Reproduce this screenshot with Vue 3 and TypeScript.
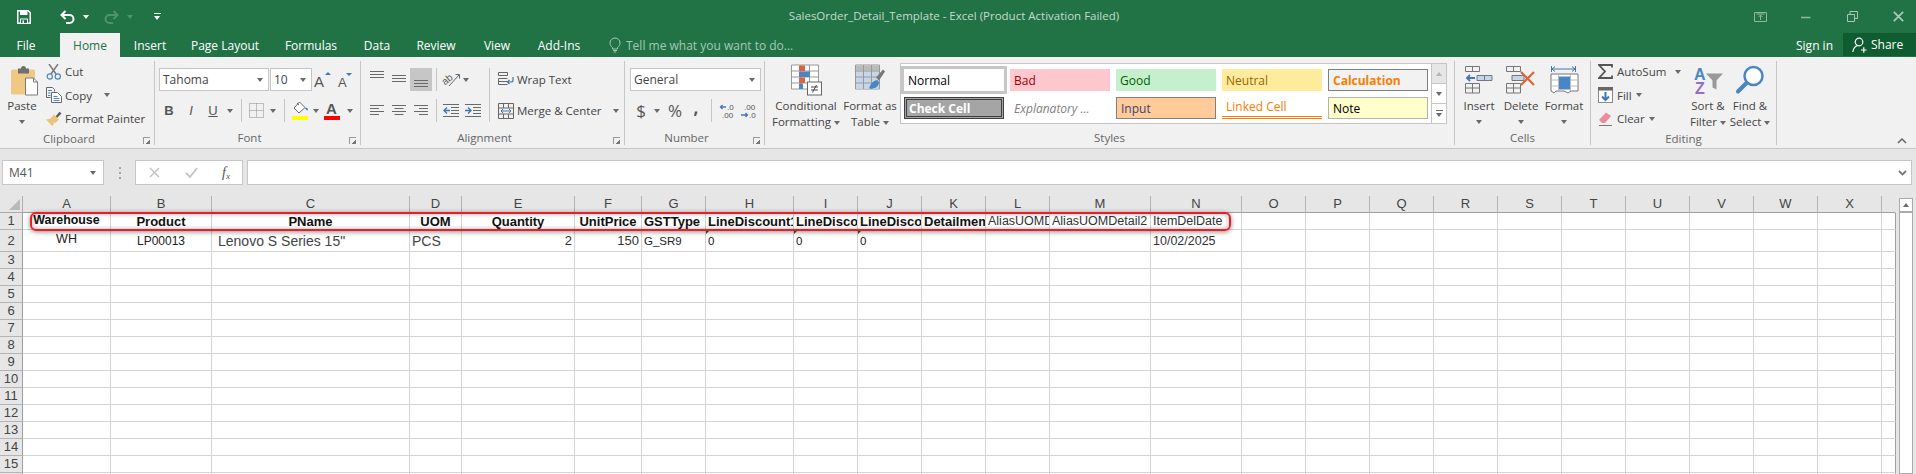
<template>
  <div class="excel">
    <!-- title bar -->
    <header class="titlebar">
      <div class="qat">
        <svg class="qat-save" width="14" height="14" viewBox="0 0 14 14"><path d="M.75.75h10.5l2 2v10.5H.75z" fill="none" stroke="#fff" stroke-width="1.5"/><path d="M3 1h7.5v4H3zM3 8.5h8V13H3z" fill="#fff"/><path d="M4 9.5h6V13H4z" fill="#217346"/><path d="M5.5 10.5h1.5V13H5.5z" fill="#fff"/></svg>
        <svg class="qat-undo" width="15" height="14" viewBox="0 0 15 14"><path d="M5.5 1 1.5 5l4 4M1.500 5H9.500a3.800 3.800 0 0 1 0 8H6" fill="none" stroke="#fff" stroke-width="2"/></svg>
        <i class="caret white qat-c1"></i>
        <svg class="qat-redo" width="15" height="14" viewBox="0 0 15 14"><path d="M9.500 1l4 4-4 4M13.500 5H5.500a3.800 3.800 0 0 0 0 8H9" fill="none" stroke="#4f9270" stroke-width="2"/></svg>
        <i class="caret dim qat-c2"></i>
        <div class="qat-more"><b></b><i class="caret white"></i></div>
      </div>
      <div class="doc-title">SalesOrder_Detail_Template - Excel (Product Activation Failed)</div>
      <div class="winctl">
        <svg width="13" height="10" viewBox="0 0 13 10"><path d="M.5.5h12v9H.5z" fill="none" stroke="#8fb8a0"/><path d="M6.500 8V3.500M4.500 5l2-2 2 2M2.500 2h8" fill="none" stroke="#8fb8a0"/></svg>
        <svg width="10" height="10" viewBox="0 0 10 10"><path d="M0 5.500h9.500" stroke="#8fb8a0" stroke-width="1.500"/></svg>
        <svg width="11" height="11" viewBox="0 0 11 11"><path d="M.5 3.500h7v7h-7zM3 3.500V.5h7.500v7h-3" fill="none" stroke="#a8c8b5"/></svg>
        <svg width="11" height="11" viewBox="0 0 11 11"><path d="M.8.8l9.400 9.400M10.200.8.800 10.200" stroke="#a8c8b5" stroke-width="1.800"/></svg>
      </div>
    </header>

    <nav class="tabs">
      <span v-for="tab in tabs" :key="tab" class="tab" :class="[tabClass(tab), { active: tab === 'Home' }]">{{ tab }}</span>
      <div class="tell">
        <svg width="12" height="16" viewBox="0 0 12 16"><path d="M3.500 10.500C2 9.500 1 8 1 6a5 5 0 0 1 10 0c0 2-1 3.500-2.500 4.500V12h-5zM4 13.500h4M4.800 15h2.400" fill="none" stroke="#a6c7b3"/></svg>
        <span>Tell me what you want to do...</span>
      </div>
      <div class="signin">Sign in</div>
      <div class="share">
        <svg width="15" height="16" viewBox="0 0 15 16"><circle cx="7" cy="5" r="3.800" fill="none" stroke="#fff" stroke-width="1.200"/><path d="M.8 15c.5-3.500 2.500-6 5-6.500M9 13h5.500M11.800 10.300v5.400" fill="none" stroke="#fff" stroke-width="1.200"/></svg>
        <span>Share</span>
      </div>
    </nav>

    <!-- ribbon -->
    <section class="ribbon">
      <div class="group clipboard">
        <div class="body row-body">
          <div class="big paste">
            <svg class="big-ico" width="30" height="31" viewBox="0 0 30 31"><rect x="2" y="5" width="24" height="25" rx="1.500" fill="#efc983"/><path d="M9 4h3a2.500 2.500 0 0 1 5 0h3v5H9z" fill="#6f6f6f"/><path d="M16.500 13.500h8l4 4v13h-12z" fill="#fff" stroke="#7a7a7a"/><path d="M24.500 13.500v4h4" fill="none" stroke="#7a7a7a"/></svg>
            <span>Paste</span>
            <i class="caret"></i>
          </div>
          <div class="small-rows">
            <div class="small">
              <svg width="16" height="16" viewBox="0 0 16 16"><path d="M3 0l7 10M12 0 5 10" stroke="#7a7a7a" stroke-width="1.500" fill="none"/><circle cx="3.800" cy="12.500" r="2.600" fill="none" stroke="#4a86c5" stroke-width="1.200"/><circle cx="11.800" cy="12.500" r="2.600" fill="none" stroke="#4a86c5" stroke-width="1.200"/></svg>
              <span>Cut</span>
            </div>
            <div class="small">
              <svg width="16" height="16" viewBox="0 0 16 16"><path d="M.5.500h6l2 2v2M.5.500v10h4" fill="none" stroke="#666"/><path d="M5.500 5.500h6l4 4v6h-10z" fill="#fff" stroke="#666"/><path d="M2 3.500h4M2 6h2.500M2 8.500h2.500M7.500 9.500h4M7.500 11.500h6M7.500 13.500h6" stroke="#4a86c5"/></svg>
              <span>Copy</span>
              <i class="caret copy-caret"></i>
            </div>
            <div class="small">
              <svg width="16" height="16" viewBox="0 0 16 16"><path d="M9.500 5.500 13.500.8 15.500 2.500 11 7z" fill="#5a5a5a"/><path d="M8 3.500l5 5-3.500 3.500-2-1 .5 2-2 2-6-6.500 3-.5 1.500-.5z" fill="#edc27d"/></svg>
              <span>Format Painter</span>
            </div>
          </div>
        </div>
        <div class="label launch-pad">Clipboard</div>
        <i class="launcher"></i>
      </div>

      <div class="group font">
        <div class="body two-rows">
          <div class="cells font-r1">
            <div class="combo font-name"><span>Tahoma</span><i class="caret"></i></div>
            <div class="combo font-size"><span>10</span><i class="caret"></i></div>
            <svg width="18" height="18" viewBox="0 0 18 18"><text x="0" y="16" class="glyph g15">A</text><path d="M11 4l3-3 3 3z" fill="#3f78b5"/></svg>
            <svg width="16" height="18" viewBox="0 0 16 18"><text x="1" y="16" class="glyph g13">A</text><path d="M9 2h6l-3 3z" fill="#3f78b5"/></svg>
          </div>
          <div class="cells font-r2">
            <b class="fmt">B</b>
            <i class="fmt">I</i>
            <u class="fmt">U</u>
            <i class="caret"></i>
            <i class="vsep"></i>
            <svg width="15" height="15" viewBox="0 0 15 15"><path d="M.5.500h14v14H.5z" fill="none" stroke="#8a8a8a" stroke-dasharray="1 1"/><path d="M7.500.500v14M.5 7.500h14" stroke="#8a8a8a" stroke-dasharray="1 1"/></svg>
            <i class="caret"></i>
            <i class="vsep"></i>
            <svg width="17" height="19" viewBox="0 0 17 19"><path d="M7.500 1 2 7l5 5 6-5.500z" fill="#fff" stroke="#666"/><path d="M13 7c2-1 3 .5 3 2.500-1 0-2.500-1-3-2.500z" fill="#3f78b5"/><path d="M5 2l2 2" stroke="#666"/><rect x="0" y="15" width="16" height="4" fill="#ffff00"/></svg>
            <i class="caret"></i>
            <svg width="17" height="19" viewBox="0 0 17 19"><text x="2" y="13" class="glyph g15 strong">A</text><rect x="0" y="15" width="16" height="4" fill="#ff0000"/></svg>
            <i class="caret"></i>
          </div>
        </div>
        <div class="label launch-pad">Font</div>
        <i class="launcher"></i>
      </div>

      <div class="group alignment">
        <div class="body align-body">
          <div class="two-rows align-left">
            <div class="cells align-r1">
              <svg width="15" height="23" viewBox="0 0 15 23"><path d="M0 3.500h14M0 6.500h14M0 9.500h14" stroke="#6a6a6a" /></svg>
              <svg width="15" height="23" viewBox="0 0 15 23"><path d="M0 7.500h14M0 10.500h14M0 13.500h14" stroke="#6a6a6a"/></svg>
              <div class="selected"><svg width="15" height="23" viewBox="0 0 15 23"><path d="M0 12.500h14M0 15.500h14M0 18.500h14" stroke="#6a6a6a"/></svg></div>
              <i class="vsep"></i>
              <svg width="19" height="17" viewBox="0 0 19 17"><text x="0" y="12" transform="rotate(-40 5 9)" class="glyph g10">ab</text><path d="M7 15 17 4M13.500 3.500H17.500V7.500" fill="none" stroke="#666"/></svg>
              <i class="caret"></i>
            </div>
            <div class="cells align-r2">
              <svg width="15" height="14" viewBox="0 0 15 14"><path d="M0 1.500h14M0 4.500h9M0 7.500h14M0 10.500h9" stroke="#6a6a6a"/></svg>
              <svg width="15" height="14" viewBox="0 0 15 14"><path d="M0 1.500h14M2.500 4.500h9M0 7.500h14M2.500 10.500h9" stroke="#6a6a6a"/></svg>
              <svg width="15" height="14" viewBox="0 0 15 14"><path d="M0 1.500h14M5 4.500h9M0 7.500h14M5 10.500h9" stroke="#6a6a6a"/></svg>
              <i class="vsep"></i>
              <svg width="17" height="14" viewBox="0 0 17 14"><path d="M0 .5h16M8 3.500h8M8 6.500h8M8 9.500h8M0 12.500h16" stroke="#6a6a6a"/><path d="M7 6.500H1.500M4 3.500l-3 3 3 3" fill="none" stroke="#3f78b5" stroke-width="1.400"/></svg>
              <svg width="17" height="14" viewBox="0 0 17 14"><path d="M0 .5h16M8 3.500h8M8 6.500h8M8 9.500h8M0 12.500h16" stroke="#6a6a6a"/><path d="M0 6.500h5.500M3 3.500l3 3-3 3" fill="none" stroke="#3f78b5" stroke-width="1.400"/></svg>
            </div>
          </div>
          <i class="vsep tall"></i>
          <div class="small-rows wm">
            <div class="wm-row">
              <svg width="16" height="15" viewBox="0 0 16 15"><path d="M.5.500h9v3h-9zM.5 6.500h9M.5 9.500h9M.5 12.500h9M.5 6.500v6" fill="none" stroke="#666"/><path d="M15 5v3a2 2 0 0 1-2 2H9.500M11.500 8l-2 2 2 2" fill="none" stroke="#3f78b5" stroke-width="1.200"/></svg>
              <span>Wrap Text</span>
            </div>
            <div class="wm-row">
              <svg width="16" height="16" viewBox="0 0 16 16"><path d="M.5.500h15v15H.5zM.5 5h15M.5 11h15M5.500.500V5M10.500.500V5M5.500 11v4.500M10.500 11v4.500" fill="none" stroke="#666"/><path d="M3 8h10M5 6l-2 2 2 2M11 6l2 2-2 2" fill="none" stroke="#3f78b5"/></svg>
              <span>Merge &amp; Center</span>
              <i class="caret merge-caret"></i>
            </div>
          </div>
        </div>
        <div class="label launch-pad">Alignment</div>
        <i class="launcher"></i>
      </div>

      <div class="group number">
        <div class="body two-rows">
          <div class="combo general"><span>General</span><i class="caret"></i></div>
          <div class="cells num-r2">
            <span class="num-sym dollar">$</span>
            <i class="caret"></i>
            <span class="num-sym pct">%</span>
            <span class="num-sym comma">,</span>
            <i class="vsep"></i>
            <svg width="18" height="16" viewBox="0 0 18 16"><text x="8" y="7" class="glyph g8">.0</text><text x="3" y="15" class="glyph g8">.00</text><path d="M7 4H1.500M3.500 2 1.500 4l2 2" fill="none" stroke="#3f78b5" stroke-width="1.300"/></svg>
            <svg width="18" height="16" viewBox="0 0 18 16"><text x="4" y="7" class="glyph g8">.00</text><text x="9" y="15" class="glyph g8">.0</text><path d="M1 12h6.500M5.500 10l2 2-2 2" fill="none" stroke="#3f78b5" stroke-width="1.300"/></svg>
          </div>
        </div>
        <div class="label launch-pad">Number</div>
        <i class="launcher"></i>
      </div>

      <div class="group styles">
        <div class="body row-body styles-body">
          <div class="big cond">
            <svg class="big-ico" width="31" height="31" viewBox="0 0 31 31"><path d="M.5.500h27v24H.5zM.5 6.500h27M.5 12.500h27M.5 18.500h27M9.500.500v24M18.500.500v24" fill="#fff" stroke="#999"/><path d="M8 1h6v5.500H8zM8 13h6v5.500H8z" fill="#e0623a"/><path d="M8 7h11v5.500H8zM8 19h4v5.500H8z" fill="#4a86c5"/><rect x="16.500" y="17.500" width="14" height="13" fill="#fff" stroke="#666"/><path d="M20 22.500h7M20 25.500h7M25.500 20.500l-4 7.500" stroke="#444"/></svg>
            <span>Conditional</span>
            <span>Formatting <i class="caret"></i></span>
          </div>
          <div class="big table">
            <svg class="big-ico" width="30" height="31" viewBox="0 0 30 31"><path d="M.5.500h24v24H.5z" fill="#fff" stroke="#999"/><path d="M1 6h23v18H1z" fill="#c5d6e8"/><path d="M1 1h23v5H1z" fill="#bbb"/><path d="M.5 6.500h24M.5 12.500h24M.5 18.500h24M8.500.500v24M16.500.500v24" stroke="#999" fill="none"/><path d="M21 13 28 5l2 2-6 9z" fill="#777"/><path d="M14 24c2-7 7-9 9-8l1 2c0 3-3 7-10 6z" fill="#4a86c5"/></svg>
            <span>Format as</span>
            <span>Table <i class="caret"></i></span>
          </div>
          <div class="gallery">
            <div class="gallery-grid">
              <div v-for="s in cellStyles" :key="s.name" class="style-cell" :class="s.cls">{{ s.name }}</div>
            </div>
            <div class="gallery-scroll">
              <div class="gs off"><i class="caret up"></i></div>
              <div class="gs"><i class="caret"></i></div>
              <div class="gs more"><b></b><i class="caret"></i></div>
            </div>
          </div>
        </div>
        <div class="label">Styles</div>
      </div>

      <div class="group cellsgrp">
        <div class="body row-body">
          <div class="big ins">
            <svg class="big-ico" width="28" height="28" viewBox="0 0 28 28"><path d="M.5.500h14v5H.5zM7.500.500v5M.5 17.500h14v9.500H.5zM.5 22h14M7.500 17.500V27" fill="none" stroke="#777"/><path d="M12 9.500h15v5H12z" fill="#c5d6e8" stroke="#777"/><path d="M19.500 9.500v5" stroke="#777"/><path d="M10 12H2M5 9 2 12l3 3" fill="none" stroke="#3f78b5" stroke-width="1.800"/></svg>
            <span>Insert</span><i class="caret"></i>
          </div>
          <div class="big del">
            <svg class="big-ico" width="30" height="28" viewBox="0 0 30 28"><path d="M.5.500h14v5H.5zM7.500.500v5M.5 17.500h14v9.500H.5zM.5 22h14M7.500 17.500V27" fill="none" stroke="#777"/><path d="M6 9.500h12v5H6z" fill="#c5d6e8" stroke="#777"/><path d="M15 6 28 19M28 6 15 19" stroke="#e0623a" stroke-width="2.200"/></svg>
            <span>Delete</span><i class="caret"></i>
          </div>
          <div class="big fmtc">
            <svg class="big-ico" width="29" height="29" viewBox="0 0 29 29"><path d="M1 3.500h23M4 1l-3 2.500L4 6M21 1l3 2.500L21 6M.5.500v6M24.500.500v6" transform="translate(1 0)" fill="none" stroke="#3f78b5"/><path d="M1 8.500h27v17H21l-3 2-4-2H6l-2 2-3-2z" fill="#fff" stroke="#777"/><path d="M1 14.500h27M1 20.500h27M8.500 8.500v17M20.500 8.500v17" stroke="#bbb"/><rect x="9" y="11" width="11" height="13" fill="#4a86c5"/></svg>
            <span>Format</span><i class="caret"></i>
          </div>
        </div>
        <div class="label">Cells</div>
      </div>

      <div class="group editing">
        <div class="body row-body">
          <div class="small-rows edit-rows">
            <div class="small">
              <svg width="15" height="15" viewBox="0 0 15 15"><path d="M14 3.500V1H1l6 6.500L1 14h13v-2.500" fill="none" stroke="#555" stroke-width="1.800"/></svg>
              <span>AutoSum</span>
              <i class="caret sum-caret"></i>
            </div>
            <div class="small">
              <svg width="15" height="16" viewBox="0 0 15 16"><rect x=".5" y=".5" width="14" height="15" fill="#fff" stroke="#888"/><rect x="0" y="0" width="15" height="3.500" fill="#666"/><path d="M7.500 5v8M4 9.500l3.500 3.500L11 9.500" fill="none" stroke="#3f78b5" stroke-width="2"/></svg>
              <span>Fill</span><i class="caret"></i>
            </div>
            <div class="small">
              <svg width="15" height="15" viewBox="0 0 15 15"><path d="M1 9l7-7.500 5 3.500-6 7H4z" fill="#ee8b99"/><path d="M1 14.500h13" stroke="#777"/></svg>
              <span>Clear</span><i class="caret"></i>
            </div>
          </div>
          <div class="big sort">
            <svg class="big-ico" width="31" height="29" viewBox="0 0 31 29"><text x="1" y="14" class="glyph letter-a">A</text><text x="2" y="28" class="glyph letter-z">Z</text><path d="M13 8h17l-6.500 7v9l-4-2v-7z" fill="#999"/></svg>
            <span>Sort &amp;</span>
            <span>Filter <i class="caret"></i></span>
          </div>
          <div class="big find">
            <svg class="big-ico" width="29" height="29" viewBox="0 0 29 29"><circle cx="17.500" cy="10.500" r="9" fill="#fff" stroke="#4a86c5" stroke-width="2.500"/><path d="M10.500 17.500 2 26" stroke="#4a86c5" stroke-width="4" stroke-linecap="round"/></svg>
            <span>Find &amp;</span>
            <span>Select <i class="caret"></i></span>
          </div>
        </div>
        <div class="label">Editing</div>
      </div>

      <div class="collapse">
        <svg width="10" height="6" viewBox="0 0 10 6"><path d="M1 5l4-4 4 4" fill="none" stroke="#666" stroke-width="1.500"/></svg>
      </div>
    </section>

    <!-- formula bar -->
    <section class="formula">
      <div class="namebox"><span>M41</span><i class="caret"></i></div>
      <div class="dots"><b></b><b></b><b></b></div>
      <div class="fxbox">
        <svg width="11" height="11" viewBox="0 0 11 11"><path d="M1 1l9 9M10 1 1 10" stroke="#c4c4c4" stroke-width="1.500"/></svg>
        <svg width="13" height="11" viewBox="0 0 13 11"><path d="M1 6l4 4 7-9" fill="none" stroke="#c4c4c4" stroke-width="1.800"/></svg>
        <em>f<sub>x</sub></em>
      </div>
      <div class="fxinput">
        <svg width="9" height="6" viewBox="0 0 9 6"><path d="M1 1l3.500 3.500L8 1" fill="none" stroke="#777" stroke-width="1.800"/></svg>
      </div>
    </section>

    <!-- sheet -->
    <section class="sheet-wrap">
      <div class="sheet" :style="{ gridTemplateColumns: gridCols }">
        <div class="corner"><i></i></div>
        <div v-for="col in columns" :key="col.key" class="col-head" :class="{ last: col.key === '' }">{{ col.key }}</div>
        <template v-for="row in rows" :key="row">
          <div class="row-head" :class="{ tall: row === 2 }">{{ row }}</div>
          <div v-for="col in columns" :key="col.key" class="cell" :class="[cellAt(row, col.key)?.cls, { edge: col.key === '' }]">
            <span>{{ cellAt(row, col.key)?.text }}</span>
          </div>
        </template>
        <div class="red-box"></div>
      </div>
      <aside class="vscroll">
        <div class="vs-up"><i class="caret up"></i></div>
        <div class="vs-thumb"></div>
      </aside>
    </section>
  </div>
</template>

<script setup lang="ts">
interface SheetCell {
  text: string;
  cls: string;
}

const tabs = ["File", "Home", "Insert", "Page Layout", "Formulas", "Data", "Review", "View", "Add-Ins"];

const tabClass = (tab: string) => "tab-" + tab.toLowerCase().replace(/[^a-z]/g, "");

const cellStyles = [
  { name: "Normal", cls: "normal" },
  { name: "Bad", cls: "bad" },
  { name: "Good", cls: "good" },
  { name: "Neutral", cls: "neutral" },
  { name: "Calculation", cls: "calc" },
  { name: "Check Cell", cls: "check" },
  { name: "Explanatory ...", cls: "expl" },
  { name: "Input", cls: "input" },
  { name: "Linked Cell", cls: "linked" },
  { name: "Note", cls: "note" },
];

// column widths include the 1px grid line on the right
const columns = [
  { key: "A", w: 88 }, { key: "B", w: 101 }, { key: "C", w: 198 }, { key: "D", w: 52 },
  { key: "E", w: 113 }, { key: "F", w: 67 }, { key: "G", w: 64 }, { key: "H", w: 88 },
  { key: "I", w: 64 }, { key: "J", w: 64 }, { key: "K", w: 64 }, { key: "L", w: 64 },
  { key: "M", w: 101 }, { key: "N", w: 91 }, { key: "O", w: 64 }, { key: "P", w: 64 },
  { key: "Q", w: 64 }, { key: "R", w: 64 }, { key: "S", w: 64 }, { key: "T", w: 64 },
  { key: "U", w: 64 }, { key: "V", w: 64 }, { key: "W", w: 64 }, { key: "X", w: 64 },
  { key: "", w: 14 },
];

const gridCols = "23px " + columns.map((c) => c.w + "px").join(" ");

const rows = Array.from({ length: 16 }, (_, i) => i + 1);

// text as far as it shows in the narrow columns
const data: Record<string, SheetCell> = {
  A1: { text: "Warehouse", cls: "bold center up wh" },
  B1: { text: "Product", cls: "bold center" },
  C1: { text: "PName", cls: "bold center" },
  D1: { text: "UOM", cls: "bold center" },
  E1: { text: "Quantity", cls: "bold center" },
  F1: { text: "UnitPrice", cls: "bold center" },
  G1: { text: "GSTType", cls: "bold" },
  H1: { text: "LineDiscount1", cls: "bold" },
  I1: { text: "LineDisco", cls: "bold" },
  J1: { text: "LineDisco", cls: "bold" },
  K1: { text: "Detailmem", cls: "bold" },
  L1: { text: "AliasUOMD", cls: "thin" },
  M1: { text: "AliasUOMDetail2", cls: "thin" },
  N1: { text: "ItemDelDate", cls: "thin" },
  A2: { text: "WH", cls: "center up small-id" },
  B2: { text: "LP00013", cls: "center" },
  C2: { text: 'Lenovo S Series 15"', cls: "large indent" },
  D2: { text: "PCS", cls: "large" },
  E2: { text: "2", cls: "right num" },
  F2: { text: "150", cls: "right num" },
  G2: { text: "G_SR9", cls: "code" },
  H2: { text: "0", cls: "code flag" },
  I2: { text: "0", cls: "code flag" },
  J2: { text: "0", cls: "code flag" },
  N2: { text: "10/02/2025", cls: "thin" },
};

const cellAt = (row: number, col: string): SheetCell | undefined => data[col + row];
</script>

<style>
html,
body {
  margin: 0;
  overflow: hidden;
  background: #fff;
}
</style>

<style scoped>
.excel {
  width: 1916px;
  height: 474px;
  overflow: hidden;
  display: flex;
  flex-direction: column;
  font-family: "Open Sans", sans-serif;
  font-size: 11.5px;
  color: #444;
}

/* small dropdown arrow used everywhere */
.caret {
  display: inline-block;
  width: 0;
  height: 0;
  border-left: 3.5px solid transparent;
  border-right: 3.5px solid transparent;
  border-top: 4px solid #6a6a6a;
  vertical-align: middle;
}
.caret.white { border-top-color: #fff; }
.caret.dim { border-top-color: #4f9270; }
.caret.up {
  border-top: 0;
  border-bottom: 4px solid #6a6a6a;
}

/* title bar */
.titlebar {
  height: 33px;
  background: #217346;
  display: grid;
  grid-template-columns: 400px 1110px 406px;
  align-items: center;
  color: #fff;
}
.qat {
  display: flex;
  align-items: center;
  height: 30px;
  padding-left: 17px;
}
.qat-undo { margin-left: 29px; }
.qat-c1 { margin-left: 8px; }
.qat-redo { margin-left: 15px; }
.qat-c2 { margin-left: 8px; }
.qat-more {
  margin-left: 21px;
  width: 7px;
  display: flex;
  flex-direction: column;
  gap: 2px;
}
.qat-more b {
  height: 1px;
  background: #fff;
}
.doc-title {
  text-align: center;
  color: #c4dbcc;
  font-size: 11.5px;
  padding-bottom: 3px;
  padding-right: 2px;
}
.winctl {
  display: grid;
  grid-template-columns: repeat(4, 46px);
  justify-items: center;
  align-items: center;
  padding-left: 227px;
  height: 30px;
}

.tabs {
  height: 24px;
  background: #217346;
  display: flex;
  align-items: stretch;
  color: #fff;
  font-size: 12px;
}
.tab {
  display: flex;
  align-items: center;
  justify-content: center;
  padding-top: 1px;
}
.tab-file { width: 52px; margin-right: 8px; }
.tab-home { width: 60px; }
.tab-insert { width: 60px; }
.tab-pagelayout { width: 90px; }
.tab-formulas { width: 82px; }
.tab-data { width: 50px; }
.tab-review { width: 68px; }
.tab-view { width: 54px; }
.tab-addins { width: 70px; }
.tab.active {
  background: #f1f1f1;
  color: #217346;
}
.tell {
  display: flex;
  align-items: center;
  gap: 5px;
  margin-left: 15px;
  color: #a6c7b3;
}
.signin {
  margin-left: auto;
  width: 70px;
  display: flex;
  align-items: center;
  padding-right: 10px;
  box-sizing: border-box;
  justify-content: flex-end;
}
.share {
  width: 73px;
  height: 23px;
  background: #0f5c30;
  display: flex;
  align-items: center;
  gap: 4px;
  padding-left: 9px;
  box-sizing: border-box;
}

/* ribbon */
.ribbon {
  height: 92px;
  box-sizing: border-box;
  background: #f1f1f1;
  border-bottom: 1px solid #c6c6c6;
  display: flex;
  padding-top: 4px;
  position: relative;
}
.group {
  height: 84px;
  box-sizing: border-box;
  border-right: 1px solid #c6c6c6;
  display: flex;
  flex-direction: column;
  position: relative;
}
.body { height: 70px; box-sizing: border-box; }
.label {
  height: 14px;
  line-height: 14px;
  text-align: center;
  color: #666;
  padding-top: 1px;
}
.launch-pad { padding-right: 16px; }
.launcher {
  position: absolute;
  right: 4px;
  bottom: 1px;
  width: 6px;
  height: 6px;
  border-left: 1px solid #9a9a9a;
  border-top: 1px solid #9a9a9a;
  background: linear-gradient(135deg, transparent 60%, #777 60%);
}
.row-body { display: flex; }

.big {
  display: flex;
  flex-direction: column;
  align-items: center;
  line-height: 16px;
  white-space: nowrap;
}
.big-ico { height: 32px; margin-top: 3px; margin-bottom: 2px; flex: none; }
.big > .caret { margin-top: 6px; }

.small-rows {
  display: flex;
  flex-direction: column;
  margin-top: -1px;
}
.small {
  height: 23.5px;
  display: flex;
  align-items: center;
  gap: 3px;
  white-space: nowrap;
}

.clipboard { width: 155px; }
.paste { width: 44px; }
.paste .big-ico { width: 30px; margin-left: 4px; }
.clipboard .small-rows { margin-left: 2px; }
.copy-caret { margin-left: 9px; }

.two-rows {
  display: flex;
  flex-direction: column;
  gap: 8px;
  padding-top: 7px;
}
.cells {
  display: grid;
  align-items: center;
  justify-items: center;
  height: 23px;
}
.vsep {
  display: block;
  width: 1px;
  height: 23px;
  background: #c6c6c6;
}
.vsep.tall { height: 54px; margin-top: 7px; }

.combo {
  height: 23px;
  box-sizing: border-box;
  background: #fff;
  border: 1px solid #c6c6c6;
  display: flex;
  align-items: center;
  justify-content: space-between;
  padding: 0 5px 0 3px;
  font-size: 12px;
}

.font { width: 206px; }
.font .two-rows { padding-left: 3px; }
.font-r1 {
  grid-template-columns: 110px 43px 22px 22px;
  margin-left: 1px;
  justify-items: stretch;
  column-gap: 0;
}
.font-r1 svg { justify-self: center; }
.font-size { margin-left: 1px; }
.font-r2 {
  grid-template-columns: 22px 22px 22px 12px 10px 20px 14px 8px 24px 8px 24px 12px;
  justify-content: start;
}
.fmt {
  font-family: "Liberation Sans", sans-serif;
  font-size: 13px;
  color: #555;
}
.glyph {
  font-family: "Liberation Sans", sans-serif;
  fill: #555;
}
.g15 { font-size: 15px; }
.g13 { font-size: 13px; }
.g10 { font-size: 10px; }
.g8 { font-size: 8px; }
.strong { font-weight: bold; }
.letter-a { font-size: 16px; font-weight: bold; fill: #4a86c5; }
.letter-z { font-size: 16px; font-weight: bold; fill: #9a6cc0; }

.alignment { width: 264px; }
.align-body { display: flex; }
.align-left { padding-left: 5px; width: 123px; flex: none; }
.align-r1 { grid-template-columns: 22px 22px 22px 8px 22px 8px; justify-content: start; }
.align-r2 { grid-template-columns: 22px 22px 22px 8px 22px 22px; justify-content: start; }
.selected {
  width: 22px;
  height: 23px;
  background: #c6c6c6;
  display: flex;
  justify-content: center;
}
.wm { margin: 7px 0 0 8px; gap: 8px; }
.wm-row {
  height: 23px;
  display: flex;
  align-items: center;
  gap: 3px;
  white-space: nowrap;
}
.merge-caret { margin-left: 8px; }

.number { width: 140px; }
.number .two-rows { padding-left: 5px; }
.general { width: 131px; padding-left: 3px; }
.num-r2 { grid-template-columns: 22px 10px 26px 16px 14px 20px 22px; justify-content: start; }
.num-sym { font-size: 17px; color: #555; line-height: 1; }
.comma { font-weight: bold; margin-bottom: 6px; }

.styles { width: 690px; }
.styles-body { padding-left: 5px; }
.cond { width: 72px; }
.table { width: 56px; }
.gallery {
  width: 547px;
  height: 61px;
  box-sizing: border-box;
  margin: 2px 0 0 2px;
  background: #fff;
  border: 1px solid #c6c6c6;
  display: flex;
}
.gallery-grid {
  display: grid;
  grid-template-columns: repeat(5, 100px);
  grid-auto-rows: 22px;
  gap: 6px;
  padding: 5px 0 0 3px;
  width: 532px;
  box-sizing: border-box;
}
.style-cell {
  box-sizing: border-box;
  display: flex;
  align-items: center;
  padding-left: 4px;
  font-size: 12px;
  white-space: nowrap;
}
.normal { color: #000; background: #fff; box-shadow: 0 0 0 3px #c6c6c6; }
.bad { background: #ffc7ce; color: #9c0006; }
.good { background: #c6efce; color: #006100; }
.neutral { background: #ffeb9c; color: #9c6500; }
.calc { background: #f2f2f2; border: 1px solid #7f7f7f; color: #fa7d00; font-weight: bold; }
.check { background: #a5a5a5; border: 3px double #3f3f3f; color: #fff; font-weight: bold; padding-left: 2px; }
.expl { color: #7f7f7f; font-style: italic; }
.input { background: #ffcc99; border: 1px solid #7f7f7f; color: #3f3f76; }
.linked { color: #fa7d00; border-bottom: 3px double #ff8001; }
.note { background: #ffffcc; border: 1px solid #b2b2b2; color: #000; }
.gallery-scroll {
  margin-left: auto;
  width: 14px;
  border-left: 1px solid #c6c6c6;
  display: flex;
  flex-direction: column;
}
.gs {
  flex: 1;
  display: flex;
  flex-direction: column;
  align-items: center;
  justify-content: center;
  gap: 2px;
}
.gs + .gs { border-top: 1px solid #c6c6c6; }
.gs.off { background: #e6e6e6; }
.gs.off .caret { border-bottom-color: #b5b5b5; }
.gs.more b { width: 7px; height: 1px; background: #6a6a6a; }

.cellsgrp { width: 136px; }
.cellsgrp .row-body { padding-left: 4px; }
.ins { width: 40px; }
.del { width: 44px; }
.fmtc { width: 42px; }

.editing { width: 186px; }
.edit-rows { width: 88px; margin-left: 7px; }
.edit-rows .small { gap: 4px; }
.sum-caret { margin-left: 5px; }
.sort { width: 44px; }
.find { width: 40px; }

.collapse {
  position: absolute;
  right: 9px;
  bottom: 4px;
  line-height: 0;
}

/* formula bar */
.formula {
  height: 47px;
  box-sizing: border-box;
  background: #e6e6e6;
  padding: 11px 4px 11px 2px;
  display: flex;
  align-items: stretch;
}
.namebox {
  width: 102px;
  box-sizing: border-box;
  background: #fff;
  border: 1px solid #c6c6c6;
  display: flex;
  align-items: center;
  justify-content: space-between;
  padding: 0 7px 0 6px;
  font-size: 12px;
  color: #555;
}
.dots {
  width: 31px;
  display: flex;
  flex-direction: column;
  align-items: center;
  justify-content: center;
  gap: 3px;
}
.dots b {
  width: 2px;
  height: 2px;
  background: #a5a5a5;
}
.fxbox {
  width: 108px;
  box-sizing: border-box;
  background: #fff;
  border: 1px solid #c6c6c6;
  display: grid;
  grid-template-columns: 36px 38px 32px;
  justify-items: center;
  align-items: center;
}
.fxbox em {
  font-family: "Liberation Serif", serif;
  font-size: 14px;
  color: #555;
}
.fxbox sub { font-size: 9px; vertical-align: -2px; line-height: 0; }
.fxinput {
  margin-left: 4px;
  flex: 1;
  box-sizing: border-box;
  background: #fff;
  border: 1px solid #c6c6c6;
  display: flex;
  align-items: center;
  justify-content: flex-end;
  padding-right: 4px;
}

/* sheet */
.sheet-wrap {
  flex: 1;
  min-height: 0;
  display: flex;
  background: #e6e6e6;
  overflow: hidden;
}
.sheet {
  display: grid;
  grid-template-rows: 17px 17px 22px;
  grid-auto-rows: 17px;
  position: relative;
  font-family: "Liberation Sans", sans-serif;
  align-content: start;
}
.corner {
  background: #e6e6e6;
  border-right: 1px solid #ababab;
  border-bottom: 1px solid #ababab;
  position: relative;
}
.corner i {
  position: absolute;
  right: 2px;
  bottom: 2px;
  width: 0;
  height: 0;
  border-left: 11px solid transparent;
  border-bottom: 11px solid #b9b9b9;
}
.col-head {
  background: #e6e6e6;
  border-bottom: 1px solid #9f9f9f;
  border-right: 1px solid #b4b4b4;
  text-align: center;
  font-size: 13px;
  line-height: 16px;
  color: #444;
  box-sizing: border-box;
}
.col-head.last { border-right: 1px solid #e6e6e6; }
.row-head {
  background: #e6e6e6;
  border-right: 1px solid #9f9f9f;
  border-bottom: 1px solid #b4b4b4;
  text-align: center;
  font-size: 13px;
  line-height: 16px;
  color: #444;
  box-sizing: border-box;
}
.row-head.tall { line-height: 21px; }
.cell {
  background: #fff;
  border-right: 1px solid #d4d4d4;
  border-bottom: 1px solid #d4d4d4;
  box-sizing: border-box;
  overflow: hidden;
  white-space: nowrap;
  display: flex;
  align-items: center;
  padding: 0 2px;
  font-size: 12px;
  color: #222;
  position: relative;
}
.cell.edge { border-right: 1px solid #9f9f9f; }
.cell.bold { font-weight: bold; font-size: 13px; color: #111; }
.cell.wh { font-size: 12.4px; }
.cell.center { justify-content: center; }
.cell.right { justify-content: flex-end; padding-right: 2px; }
.cell.up span { margin-bottom: 3px; }
.cell.thin { font-size: 12.5px; color: #333; }
.cell.code { font-size: 11.5px; }
.cell.num { font-size: 13px; color: #333; }
.cell.large { font-size: 14px; color: #444; }
.cell.indent { padding-left: 6px; }
.cell.small-id { font-size: 12.5px; }
.cell.flag::before {
  content: "";
  position: absolute;
  left: 0;
  top: 0;
  border-top: 4px solid #107c10;
  border-right: 4px solid transparent;
}
/* hand-drawn highlight from the original picture */
.red-box {
  position: absolute;
  left: 30px;
  top: 16px;
  width: 1201px;
  height: 19px;
  box-sizing: border-box;
  border: 2px solid #ee1c25;
  border-radius: 6px;
  box-shadow: 0 1px 5px rgba(0, 0, 0, 0.45), inset 0 0 5px rgba(0, 0, 0, 0.3);
  pointer-events: none;
}
.vscroll {
  width: 14px;
  margin-left: 3px;
  padding-top: 2px;
  display: flex;
  flex-direction: column;
}
.vs-up {
  height: 15px;
  box-sizing: border-box;
  background: #fff;
  border: 1px solid #ababab;
  border-bottom-width: 2px;
  display: flex;
  align-items: center;
  justify-content: center;
}
.vs-thumb {
  flex: 1;
  background: #fff;
  border: 1px solid #ababab;
  border-top: 0;
}
</style>
